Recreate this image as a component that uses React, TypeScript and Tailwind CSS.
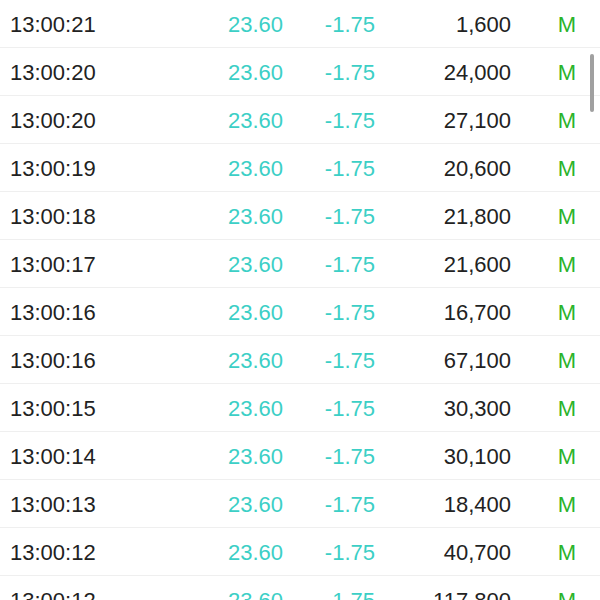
const trades = [
  ["13:00:21", "1,600"],
  ["13:00:20", "24,000"],
  ["13:00:20", "27,100"],
  ["13:00:19", "20,600"],
  ["13:00:18", "21,800"],
  ["13:00:17", "21,600"],
  ["13:00:16", "16,700"],
  ["13:00:16", "67,100"],
  ["13:00:15", "30,300"],
  ["13:00:14", "30,100"],
  ["13:00:13", "18,400"],
  ["13:00:12", "40,700"],
  ["13:00:12", "117,800"],
];

export default function App() {
  return (
    <div
      className="relative h-[600px] w-[600px] overflow-hidden bg-white text-[22px]"
      style={{ fontFamily: '"Liberation Sans", Arial, sans-serif' }}
    >
      {/* scroll indicator */}
      <div className="absolute left-[590px] top-[54px] h-[58px] w-[4px] rounded-full bg-[#a0a0a0]" />

      {trades.map(([time, vol], i) => (
        <div
          key={i}
          className="flex h-[48px] items-center border-b border-[#efefef] pl-[10px] pt-[1px]"
        >
          <span className="w-[180px] shrink-0 text-[#222]">{time}</span>
          <span className="w-[93px] shrink-0 text-right text-[#3ccfc6]">23.60</span>
          <span className="w-[92px] shrink-0 text-right text-[#3ccfc6]">-1.75</span>
          <span className="w-[136px] shrink-0 text-right text-[#222]">{vol}</span>
          <span className="w-[65px] shrink-0 text-right text-[#2bb32b]">M</span>
        </div>
      ))}
    </div>
  );
}
